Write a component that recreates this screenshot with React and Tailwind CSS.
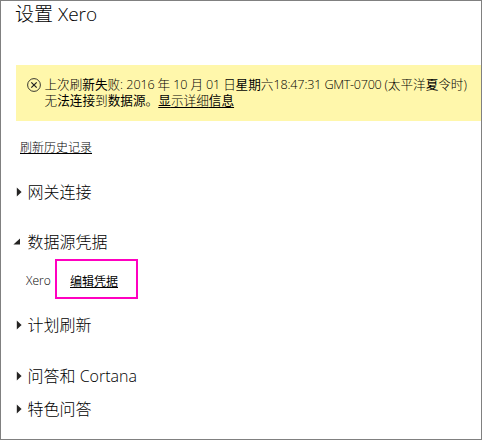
import React from "react";

function Arrow({ open }) {
  return (
    <svg width="12" height="12" viewBox="0 0 12 12" className="shrink-0" fill="#252423">
      {open ? <path d="M7 2.5v6H.4z" /> : <path d="M3.8 1.5 8.6 6 3.8 10.5z" />}
    </svg>
  );
}

function Section({ open, className, children }) {
  return (
    <div className={"flex h-6 items-center pl-3 text-[16px] leading-6 " + className}>
      <Arrow open={open} />
      <span className="ml-[2.5px] whitespace-nowrap">{children}</span>
    </div>
  );
}

function Strong({ children }) {
  return <span className="font-normal">{children}</span>;
}

export default function App() {
  return (
    <div className="h-[440px] w-[482px] overflow-hidden border border-[#808080] bg-white font-['Open_Sans','Noto_Sans_CJK_SC',sans-serif] font-light text-black">
      <h1 className="mt-px ml-[14px] h-6 text-[19px] leading-6 whitespace-nowrap">
        设置 <span>Xero</span>
      </h1>
      <div className="mt-[39px] ml-[15px] flex h-14 bg-[#fff7ab] pt-3 pl-[11px] text-[12.6px] leading-4">
        <svg width="14" height="14" viewBox="0 0 14 14" className="mt-px shrink-0" fill="none" stroke="#222" strokeWidth="0.9">
          <circle cx="7" cy="7" r="6.4" />
          <path d="M4.3 4.3l5.4 5.4M9.7 4.3l-5.4 5.4" strokeWidth="1.2" />
        </svg>
        <div className="ml-[3.5px] whitespace-nowrap">
          <p>
            上次刷<Strong>新失</Strong>败: <span className="tracking-[-0.15px]">2016 年 10 月 01 日</span>
            <Strong>星期</Strong>六<span className="tracking-[-0.15px]">18:47:31 </span>
            <span className="tracking-[-0.3px]">GMT-0700 </span>
            <span>(太平洋<Strong>夏</Strong>令时)</span>
          </p>
          <p className="tracking-[0.04px]">
            无<Strong>法连接</Strong>到<Strong>数据源</Strong>。
            <a className="underline underline-offset-2">
              <Strong>显</Strong>示详细<Strong>信息</Strong>
            </a>
          </p>
        </div>
      </div>
      <a className="mt-[19px] ml-[19px] block h-4 text-[12px] leading-4 underline underline-offset-1">刷新历史记录</a>
      <Section className="mt-[24px]">网关连接</Section>
      <Section open className="mt-[26px]">数据源凭据</Section>
      <div className="mt-[5px] flex h-10 items-center pl-[25px] text-[12px]">
        <span className="w-[29px] pt-1 whitespace-nowrap">Xero</span>
        <div className="flex h-10 w-[83px] items-center border-2 border-[#ff00c0] pt-1.5 pl-[13px]">
          <a className="font-normal whitespace-nowrap underline underline-offset-1">编辑凭据</a>
        </div>
      </div>
      <Section className="mt-[14px]">计划刷新</Section>
      <Section className="mt-[27px]">问答和 Cortana</Section>
      <Section className="mt-[9px]">特色问答</Section>
    </div>
  );
}
